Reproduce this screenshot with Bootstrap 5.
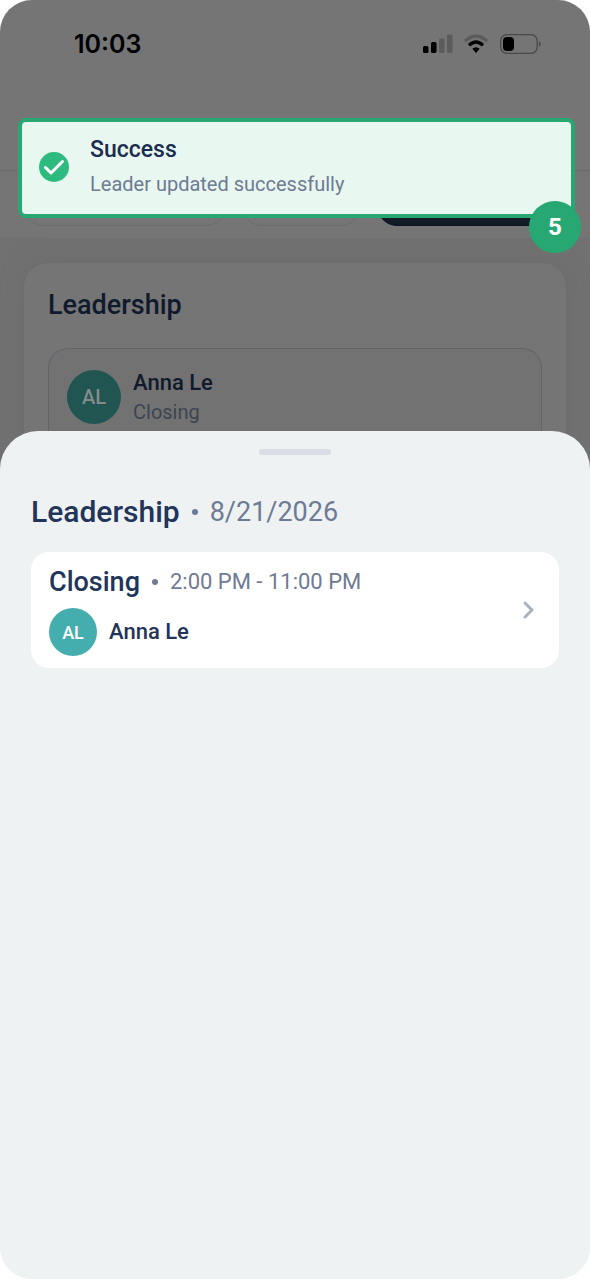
<!DOCTYPE html>
<html lang="en">
<head>
<meta charset="utf-8">
<meta name="viewport" content="width=device-width, initial-scale=1">
<title>Leadership</title>
<link href="https://cdn.jsdelivr.net/npm/bootstrap@5.3.0/dist/css/bootstrap.min.css" rel="stylesheet">
<style>
  :root { --ink: #22345a; --ink-dim: #101a2c; --muted: #6f7a93; --muted-dim: #3e4450; --green: #27a873; }
  body { font-family: Roboto, "Liberation Sans", sans-serif; background: #fff; color: var(--ink); }
  .phone { background: #eef2f3; border-radius: 32px; overflow: hidden; }

  /* Dimmed page behind the sheet */
  .dimmed { background: #757575; color: var(--ink-dim); }
  .status { height: 88px; padding: 0 49px 0 74px; color: #000; }
  .clock { font: 600 25px/32px Inter, sans-serif; }
  .page-head { height: 83px; border-bottom: 1px solid #6c6c6c; }
  .filters { padding: 11px 24px 12px; gap: 16px; }
  .pill { height: 44px; border: 1px solid #6c6c6e; border-radius: 20px; }
  .pill-wide { flex: 202; }
  .pill-short { flex: 119; }
  .pill-dark { flex: 189; background: #131b29; border-color: #0b1322; }
  .content-area { background: #717171; padding: 25px 24px 0; }
  .panel { background: #757575; border-radius: 24px; padding: 24px 24px 48px; box-shadow: 0 0 20px #6c6c70; }
  .panel-title { font-size: 27px; line-height: 36px; margin-bottom: 25px; }
  .leader { background: #727272; border: 1px solid #626469; border-bottom: 0; border-radius: 20px 20px 0 0; padding: 19px 18px 5px; gap: 12px; }
  .avatar { border-radius: 50%; flex: none; }
  .avatar-dim { width: 54px; height: 54px; background: #205552; color: #858b8b; font-size: 20px; }
  .role { color: var(--muted-dim); }

  /* Toast */
  .notice { top: 118px; left: 18px; right: 15px; z-index: 2; height: 100px; background: #e8f7f0; border: 4px solid var(--green); border-radius: 8px; padding: 0 17px 3px; gap: 21px; color: #1b2c50; }
  .text-23 { font-size: 23px; line-height: 30px; }
  .text-22 { font-size: 22px; line-height: 30px; }
  .text-20 { font-size: 20px; line-height: 28px; }
  .notice-gap { margin-top: 5px; }
  .step { right: -10px; bottom: -39px; width: 52px; height: 52px; border-radius: 50%; background: var(--green); color: #fff; font-size: 24px; }

  /* Bottom sheet */
  .sheet { background: #eef2f3; border-radius: 38px 38px 0 0; margin-top: -48px; z-index: 1; padding: 18px 31px 32px; }
  .grip { width: 72px; height: 6px; border-radius: 3px; background: #dadde4; }
  .sheet-title { margin: 37px 0 20px; gap: 12px; }
  .text-30 { font-size: 30px; line-height: 40px; }
  .text-27 { font-size: 27px; line-height: 36px; }
  .muted { color: var(--muted); }
  .bullet { width: 6px; height: 6px; border-radius: 50%; background: var(--muted); }
  .shift { background: #fff; border-radius: 18px; padding: 12px 19px 12px 18px; color: var(--ink); }
  .shift-line { gap: 12px; margin-bottom: 8px; }
  .avatar-live { width: 48px; height: 48px; background: #44adad; color: #fff; font-size: 18px; }
</style>
</head>
<body>
<div class="phone position-relative d-flex flex-column min-vh-100">
  <div class="dimmed">
    <div class="status d-flex align-items-center justify-content-between">
      <span class="clock">10:03</span>
      <div class="d-flex align-items-center">
        <svg width="118" height="20" viewBox="0 0 118 20" role="img" aria-label="Signal, Wi-Fi and battery">
          <rect x="0" y="12" width="5.500" height="7" rx="1.500"/>
          <rect x="8" y="8" width="5.500" height="11" rx="1.500"/>
          <g fill="#5b5b5b"><rect x="16" y="4.500" width="5.500" height="14.500" rx="1.500"/><rect x="24" y="0.500" width="5.500" height="18.500" rx="1.500"/></g>
          <g fill="none" stroke-width="3.200">
            <path d="M42 7.200Q53 -2.800 64 7.200" stroke="#5b5b5b"/>
            <path d="M46 11.300Q53 4.800 60 11.300" stroke="#000"/>
          </g>
          <path d="M49.300 14.800Q53 11.600 56.700 14.800L53 19Z"/>
          <rect x="77.700" y="0.700" width="36.500" height="18.600" rx="6" fill="none" stroke="#494949" stroke-width="1.300"/>
          <rect x="80" y="3" width="11" height="14" rx="4"/>
          <path d="M116 7.500Q117.800 8.300 117.800 10T116 12.700Z" fill="#494949"/>
        </svg>
      </div>
    </div>
    <div class="page-head"></div>
    <div class="filters d-flex" aria-hidden="true">
      <div class="pill pill-wide"></div>
      <div class="pill pill-short"></div>
      <div class="pill pill-dark"></div>
    </div>
    <div class="content-area">
      <section class="panel">
        <h2 class="panel-title fw-medium">Leadership</h2>
        <div class="leader d-flex align-items-center">
          <span class="avatar avatar-dim d-flex align-items-center justify-content-center fw-medium">AL</span>
          <div>
            <div class="text-22 fw-medium">Anna Le</div>
            <div class="role text-20">Closing</div>
          </div>
        </div>
      </section>
    </div>
  </div>

  <div class="notice position-absolute d-flex align-items-center" role="status">
    <svg class="flex-shrink-0" width="30" height="30" viewBox="0 0 30 30" aria-hidden="true">
      <circle cx="15" cy="15" r="15" fill="#2dbb7f"/>
      <path d="M6.500 15.500L12 21L23.500 9.500" fill="none" stroke="#fff" stroke-width="3" stroke-linecap="round" stroke-linejoin="round"/>
    </svg>
    <div>
      <div class="text-23 fw-medium">Success</div>
      <div class="muted text-20 notice-gap">Leader updated successfully</div>
    </div>
    <span class="step position-absolute d-flex align-items-center justify-content-center fw-bold">5</span>
  </div>

  <main class="sheet position-relative flex-grow-1">
    <div class="grip mx-auto"></div>
    <div class="sheet-title d-flex align-items-center">
      <h1 class="text-30 fw-medium mb-0">Leadership</h1>
      <span class="bullet"></span>
      <span class="muted text-27">8/21/2026</span>
    </div>
    <a href="#" class="shift d-flex align-items-center justify-content-between text-decoration-none">
      <div>
        <div class="shift-line d-flex align-items-center">
          <span class="text-27 fw-medium">Closing</span>
          <span class="bullet"></span>
          <span class="muted text-22">2:00 PM - 11:00 PM</span>
        </div>
        <div class="d-flex align-items-center gap-2">
          <span class="avatar avatar-live d-flex align-items-center justify-content-center fw-medium">AL</span>
          <span class="text-22 fw-medium ms-1">Anna Le</span>
        </div>
      </div>
      <svg width="22" height="22" viewBox="0 0 22 22" aria-hidden="true"><path d="M7 4L14 11L7 18" fill="none" stroke="#a9b0bf" stroke-width="3" stroke-linecap="round" stroke-linejoin="round"/></svg>
    </a>
  </main>
</div>
<script src="https://cdn.jsdelivr.net/npm/bootstrap@5.3.0/dist/js/bootstrap.bundle.min.js"></script>
</body>
</html>
